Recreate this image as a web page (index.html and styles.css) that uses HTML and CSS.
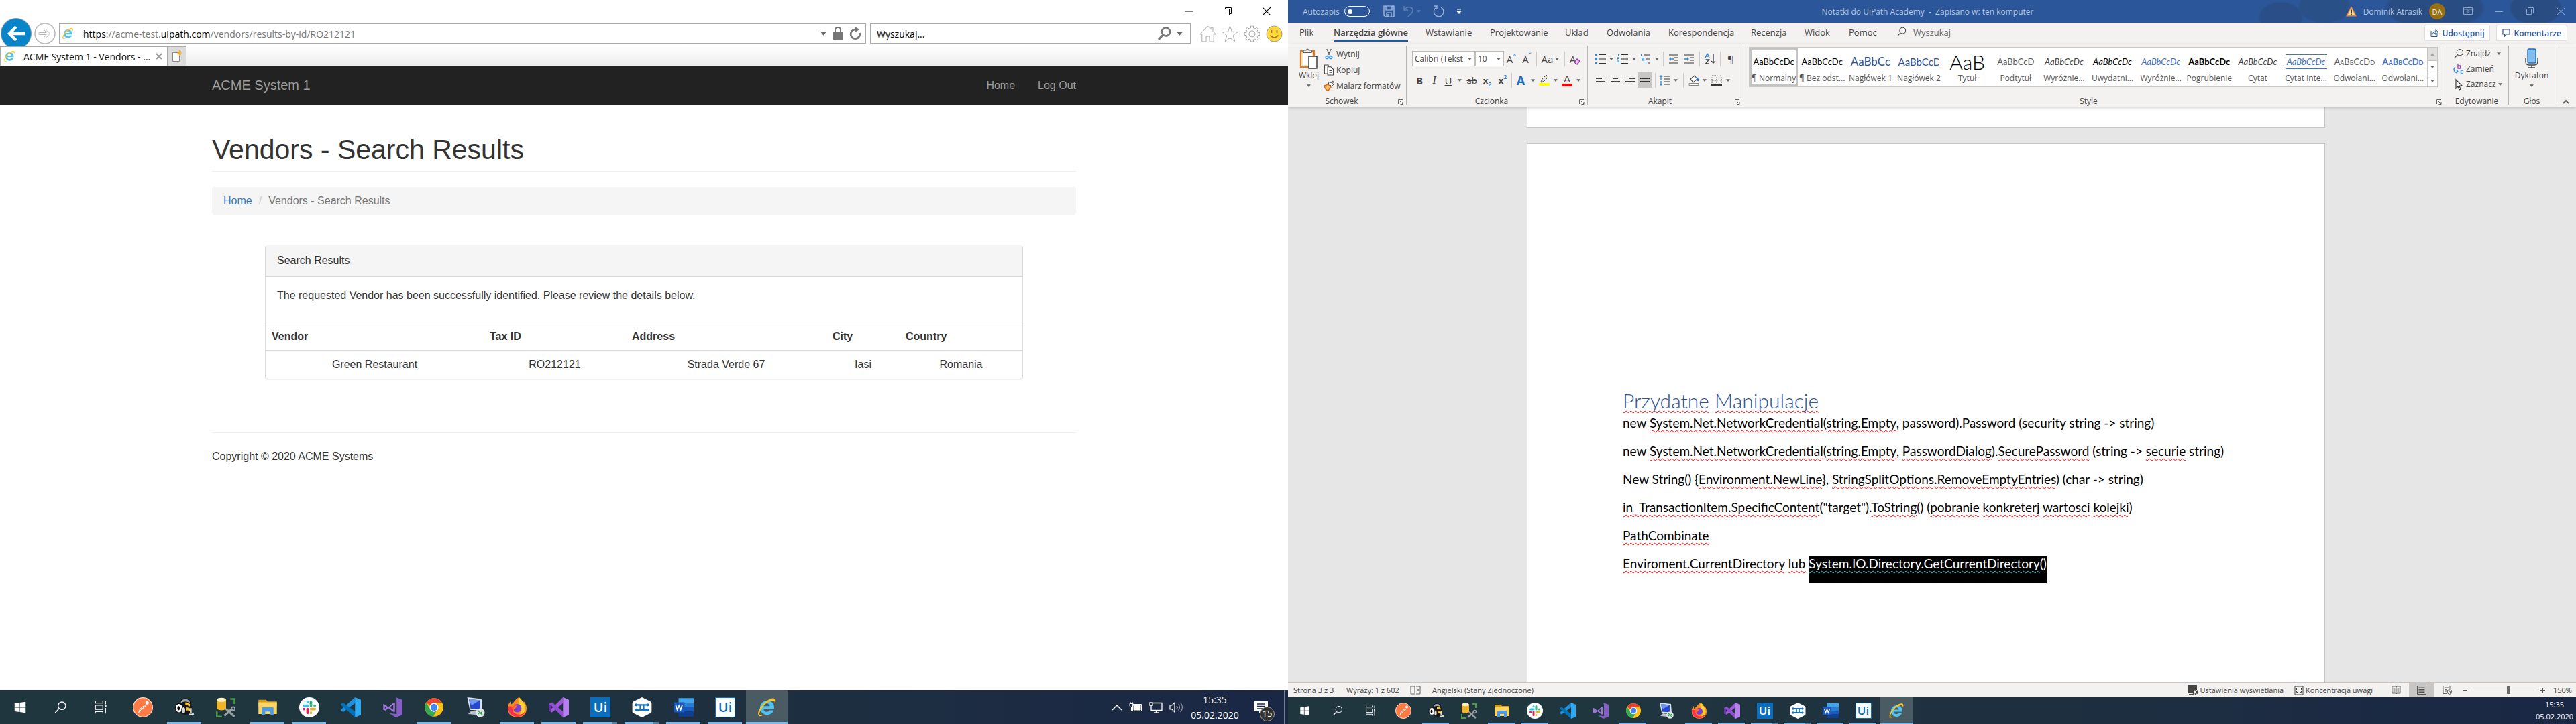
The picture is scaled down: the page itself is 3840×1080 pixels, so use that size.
FILE: index.html
```html
<!DOCTYPE html>
<html lang="pl">
<head>
<meta charset="utf-8">
<title>Vendors - Search Results</title>
<meta name="viewport" content="width=device-width, initial-scale=1">
<link rel="stylesheet" href="styles.css">
</head>
<body>
<svg class="defs" aria-hidden="true">
  <symbol id="arr" viewBox="0 0 8 5"><path d="M0 0h8L4 5z" fill="currentColor"/></symbol>
  <symbol id="win" viewBox="0 0 24 24"><path d="M3 5.500 10.500 4.400V11.500H3zM11.500 4.300 21 3v8.500h-9.500zM3 12.500h7.500v7.100L3 18.500zM11.500 12.500H21V21l-9.500-1.300z" fill="#fff"/></symbol>
  <symbol id="find" viewBox="0 0 24 24"><g fill="none" stroke="currentColor" stroke-width="1.500"><circle cx="14.500" cy="9.500" r="6.200"/><path d="M10 14 3.500 21"/></g></symbol>
  <symbol id="tview" viewBox="0 0 24 24"><g fill="none" stroke="#fff" stroke-width="1.300"><path d="M3.600 2v3h12V2M3.600 22v-3h12v3M3.600 8.500h12v7h-12zM20 2v5M20 13v9"/></g><path d="M18.700 8.500h2.600v3h-2.600z" fill="#fff"/></symbol>
  <symbol id="postman" viewBox="0 0 24 24"><circle cx="12" cy="12" r="11.500" fill="#ff7b45" stroke="#ffd9c8"/><path d="M6 20 8 14 14.500 8.500 16 10.500 10 15z" fill="#fff"/><circle cx="17" cy="6.500" r="2" fill="#fff"/><path d="M8.500 15 15 9.500" stroke="#ff6c37" stroke-width=".8"/></symbol>
  <symbol id="bee" viewBox="0 0 24 24"><ellipse cx="13" cy="6.500" rx="6" ry="5" fill="#9aa2a8" stroke="#111"/><ellipse cx="13" cy="13" rx="8" ry="8" fill="#151515"/><path d="M13 6q4 0 6 3l-1 2q-2-2-5-2zM14 12q4 0 5 2v3q-2-2-5-1z" fill="#f5c232"/><ellipse cx="5.500" cy="13" rx="4.500" ry="5.500" fill="#fff" stroke="#111"/><ellipse cx="5" cy="13" rx="1.500" ry="2.500"/><ellipse cx="11" cy="15.500" rx="2.300" ry="4" fill="#ddd" stroke="#111"/><path d="M19.500 13v6M17.500 20.500h3.500l2-1" stroke="#ddd" stroke-width="2" fill="none"/></symbol>
  <symbol id="db" viewBox="0 0 24 24"><path d="M1 3v11q5.500 3 11 0V3z" fill="#f0b429"/><ellipse cx="6.500" cy="3" rx="5.500" ry="2.500" fill="#fff0c0"/><path d="M17 2h5v6M1 17v6h6" fill="none" stroke="#4c9a45" stroke-width="2"/><path d="m10 22 9-8M12 14l10 9" stroke="#9aa0a3" stroke-width="2.500"/><circle cx="20.500" cy="13.500" r="2" fill="none" stroke="#9aa0a3" stroke-width="1.500"/></symbol>
  <symbol id="folder" viewBox="0 0 24 24"><path d="M1 3h9l2 2h11v6H1z" fill="#d69d16"/><path d="M1 6h22v14H1z" fill="#fcd462"/><path d="M5 21v-8q0-1 1-1h12q1 0 1 1v8h-4v-4H9v4z" fill="#4a9be8"/></symbol>
  <symbol id="slack" viewBox="0 0 24 24"><circle cx="12" cy="12" r="12" fill="#fff"/><g stroke-width="3" stroke-linecap="round"><path d="M10 5.500v.01M5.500 10H10" stroke="#36c5f0"/><path d="M14 5.500V10M18.500 10h.01" stroke="#2eb67d"/><path d="M14 14h4.500M14 18.500h.01" stroke="#ecb22e"/><path d="M10 14v4.500M5.500 14h.01" stroke="#e01e5a"/></g></symbol>
  <symbol id="code" viewBox="0 0 24 24"><path d="M17 0v7L3 17.500 0 16v-1z" fill="#1f8fdc"/><path d="M17 24v-7L3 6.500 0 8v1z" fill="#0072ba"/><path d="M17 0 24 3v18l-7 3z" fill="#2fa9f4"/></symbol>
  <symbol id="vsi" viewBox="0 0 24 24"><path d="M16 0 24 3v18l-8 3-8-5 9 1V3z" fill="#865fc5"/><path d="m1 8 3 1 3 3 7-6 1 1v10l-1 1-7-5-3 3-3-1zM3 11v3l2-2zM13 9l-4 3 4 3z" fill="#a074dc" fill-rule="evenodd"/></symbol>
  <symbol id="chrome" viewBox="0 0 24 24"><circle cx="12" cy="12" r="11" fill="#fbc116"/><path d="M12 12 2.500 6.500A11 11 0 0 1 21.500 6.500H12z" fill="#ea4335"/><path d="M2.500 6.500A11 11 0 0 0 11 23l5-8.500-8.500-.5z" fill="#34a853"/><circle cx="12" cy="12" r="5.300" fill="#fff"/><circle cx="12" cy="12" r="4.200" fill="#4285f4"/></symbol>
  <symbol id="rdp" viewBox="0 0 24 24"><path d="M2 0 19 2l1 14-15-1z" fill="#dfe3ea"/><path d="m4 2 13 1.500.8 11L6 13.500z" fill="#2747d0"/><path d="m4 2 13 1.500-10 6z" fill="#6f9bf2"/><path d="m7 16 7 1v4l-11-1z" fill="#b9bec6"/><circle cx="17.500" cy="18.500" r="5.300" fill="#e6e9ea"/><path d="m15 16 2 2-2 2M20 17l-2 2 2 2" fill="none" stroke="#25a148" stroke-width="1.300"/></symbol>
  <symbol id="fox" viewBox="0 0 24 24"><path d="M14 0q3 2 5 6l1-1q4 5 3 10a11 9 0 0 1-22 0q-1-6 3-10v4l3-2q2-4 7-7z" fill="#ff8a1c"/><path d="M14 0q3 2 5 6 4 5 2 10-2 5-7 5 5-5 2-10-4-5-2-11z" fill="#ffcf33"/><path d="M1 11q0 10 9 12 8 1 12-6-7 6-13 2-4-3-2-8z" fill="#f7314f"/><circle cx="12" cy="13" r="5" fill="#7b3fd0"/><path d="M6 10q4-1 6 0l-2 3q-3 1-2 4-3-2-2-7z" fill="#ff6a2a"/></symbol>
  <symbol id="vs" viewBox="0 0 24 24"><path d="M17 0v7L4 18l-4-2v-1l3-1z" fill="#a259dc"/><path d="M0 8v8l3 1V7z" fill="#6a33a8"/><path d="M17 24v-7L4 6 0 8l3 2z" fill="#8f4fd0"/><path d="M17 0 24 3v18l-7 3z" fill="#b57ff0"/></symbol>
  <symbol id="hex" viewBox="0 0 24 24"><path d="M12 0 22 5q1.500 1 1.500 2v10q0 1-1.500 2L12 24 2 19Q.5 18 .5 17V7Q.5 6 2 5z" fill="#fff"/><path d="M5 9h14M5 15h14M10 9v6M14 9v6" stroke="#1673c1" stroke-width="1.800"/><g fill="#1673c1"><circle cx="5" cy="9" r="1.700"/><circle cx="19" cy="9" r="1.700"/><circle cx="5" cy="15" r="1.700"/><circle cx="19" cy="15" r="1.700"/></g></symbol>
  <symbol id="word" viewBox="0 0 24 24"><path d="M6 1h18v6H6z" fill="#41a5ee"/><path d="M6 7h18v5H6z" fill="#2b7cd3"/><path d="M6 12h18v5H6z" fill="#185abd"/><path d="M6 17h18v6H6z" fill="#103f91"/><path d="M0 6h13v12H0z" fill="#185abd"/><path d="m2.500 9 2 6 2-5 2 5 2-6" fill="none" stroke="#fff" stroke-width="1.400"/></symbol>
  <symbol id="ie" viewBox="0 0 24 24"><path d="M12 4a8.500 8.500 0 1 0 8.300 11.500h-5q-1 1.800-3.300 1.800-3.600 0-3.800-3.800h12.600Q21 4 12 4zM8.300 10.500Q8.800 7.300 12 7.300t3.600 3.200z" fill="#4fc3f1"/><path d="M3.500 22.500Q-.5 21 4 13 9 5 16 2q6-2 6.500 1.500.2 1.500-1 4 .5-4-3.500-3.500Q10 6 5 15q-3.500 6-.5 6.500 2 0 5-1.500-4 3-6 2.500z" fill="#f7c52c"/></symbol>
  <symbol id="launch" viewBox="0 0 8 8"><path d="M.5 7V.5H7M3 3l4 4M7 4v3.500H3.500" fill="none" stroke="#666"/></symbol>
  <symbol id="scis" viewBox="0 0 12 18"><path d="M2.500 1 8 12M9.500 1 4 12" stroke="#555" stroke-width="1.300"/><g fill="none" stroke="#2b88d8" stroke-width="1.600"><circle cx="3" cy="14.500" r="2"/><circle cx="9" cy="14.500" r="2"/></g></symbol>
  <symbol id="copy" viewBox="0 0 16 18"><g fill="#fff" stroke="#444" stroke-width="1.200"><path d="M5.500 15H1V1h6v3M6 4h5l4 4v9H6z"/><path d="M8.500 10h4M8.500 13h4"/></g></symbol>
  <symbol id="brush" viewBox="0 0 16 16"><path d="m1 8 6-2 4 4-4 5q-4 0-6-7z" fill="#f9c06a" stroke="#d9661f" stroke-width="1.400"/><path d="m7 4 5 5 3-3-2-1 2-3-2-1-2 3-1-2z" fill="#fff" stroke="#555"/></symbol>
  <symbol id="paste" viewBox="0 0 28 32"><path d="M2 5h20v24H2z" fill="#fff" stroke="#e07a1f" stroke-width="2.200"/><path d="M4 7h16v20H4z" fill="#fff" stroke="#f8cd80"/><path d="M6 7.500V4h4q2-4 4 0h4v3.500z" fill="#f3f2f1" stroke="#555" stroke-width="1.200"/><path d="M14 13h12v18H14z" fill="#fff" stroke="#333" stroke-width="1.400"/></symbol>
</svg>

<div class="desktop">
<!-- Internet Explorer -->
<section class="screen ie">
  <header class="ie-title">
    <button class="wb" aria-label="Minimalizuj"><svg width="12" height="12"><path d="M0 6h12" stroke="#000" stroke-width="1"/></svg></button>
    <button class="wb" aria-label="Przywróć"><svg width="12" height="12" fill="none" stroke="#000"><path d="M.5 2.500h8v9h-8zM2.500 2.500v-2h9v9h-3"/></svg></button>
    <button class="wb" aria-label="Zamknij"><svg width="12" height="12"><path d="m0 0 12 12M12 0 0 12" stroke="#000" stroke-width="1.200"/></svg></button>
  </header>
  <div class="ie-nav">
    <button class="back" aria-label="Wstecz"><svg width="46" height="46" viewBox="0 0 46 46"><circle cx="23" cy="23" r="22.500" fill="#0a84c8" stroke="#8a9aa4"/><path d="M36 23H14M23 13 13 23l10 10" fill="none" stroke="#fff" stroke-width="4.500"/></svg></button>
    <button class="fwd" aria-label="Dalej"><svg width="32" height="32" viewBox="0 0 32 32" fill="none" stroke="#b8b8b8" stroke-width="1.500"><circle cx="16" cy="16" r="15"/><path d="M7 14.500h11l-4-5h3l6.500 6.500-6.500 6.500h-3l4-5H7z" stroke-width="1"/></svg></button>
    <div class="addr">
      <svg class="i18"><use href="#ie"/></svg>
      <div class="url" role="textbox" aria-label="Adres"><b>https</b>://acme-test.<b>uipath.com</b>/vendors/results-by-id/RO212121</div>
      <svg class="ar"><use href="#arr"/></svg>
      <svg width="16" height="20" viewBox="0 0 16 20"><path d="M1 8h14v11H1z" fill="#777"/><path d="M4 9V5q0-4 4-4t4 4v4" fill="none" stroke="#777" stroke-width="2"/></svg>
      <svg width="18" height="20" viewBox="0 0 18 20"><path d="M12.500 5A6.800 6.800 0 1 0 15.500 9" fill="none" stroke="#777" stroke-width="2.700"/><path d="M9 0v8l6-4z" fill="#777"/></svg>
    </div>
    <div class="srch">
      <input aria-label="Wyszukaj" value="Wyszukaj...">
      <svg width="20" height="20" viewBox="0 0 20 20" fill="none" stroke="#777"><circle cx="12" cy="7.500" r="6" stroke-width="2.700"/><path d="m7.500 12-6.500 7" stroke-width="3"/></svg>
      <svg class="ar"><use href="#arr"/></svg>
    </div>
    <button aria-label="Strona główna"><svg width="25" height="25" viewBox="0 0 25 25" fill="#fff" stroke="#aaa"><path d="M12.500 1 .8 13h3v11H10v-8h5v8h6.200V13h3L20 8.500V3h-3v2.500z"/></svg></button>
    <button aria-label="Ulubione"><svg width="25" height="25" viewBox="0 0 25 25" fill="#fff" stroke="#aaa"><path d="m12.500 1 3 8.300 8.700.2-7 5.300 2.600 8.700-7.300-5-7.300 5 2.600-8.700-7-5.300 8.700-.2z"/></svg></button>
    <button aria-label="Narzędzia"><svg width="25" height="25" viewBox="0 0 25 25" fill="#fff" stroke="#aaa"><path d="M10.500 1h4v3l2.500 1 2.300-2 2.700 2.700L20 8.200l1 2.300h3v4h-3l-1 2.500 2 2.300-2.700 2.700-2.300-2-2.500 1v3h-4v-3L8 20l-2.300 2L3 19.300 5 17l-1-2.500H1v-4h3L5 8.200 3 5.700 5.700 3 8 5l2.500-1z"/><circle cx="12.500" cy="12.500" r="4.500"/></svg></button>
    <button aria-label="Opinia"><svg width="25" height="25" viewBox="0 0 25 25"><circle cx="12.500" cy="12.500" r="11.500" fill="#ffd83d" stroke="#9b9b9b"/><path d="M8.500 7v4M16.500 7v4M6.500 14.500q6 7 12 0" fill="none" stroke="#a07a20" stroke-width="1.700"/></svg></button>
  </div>
  <div class="ie-tabs">
    <div class="tab"><svg class="i18"><use href="#ie"/></svg><span>ACME System 1 - Vendors - ...</span><button aria-label="Zamknij kartę"><svg width="10" height="10"><path d="m1 1 8 8M9 1 1 9" stroke="#999" stroke-width="2"/></svg></button></div>
    <button class="newtab" aria-label="Nowa karta"><svg width="16" height="18" viewBox="0 0 16 18"><path d="M1.500 3.500h10v13h-10z" fill="#fff" stroke="#888"/><path d="M11.500 0v8M8 4h7M9 1.500l5 5M14 1.500l-5 5" stroke="#f5a623" stroke-width="1.200"/></svg></button>
  </div>
  <nav class="navbar"><div class="wrap">
    <a class="brand" href="#">ACME System 1</a>
    <span class="links"><a href="#">Home</a><a href="#">Log Out</a></span>
  </div></nav>
  <main class="wrap acme">
    <h1>Vendors - Search Results</h1>
    <div class="crumb"><a href="#">Home</a><i>/</i><span>Vendors - Search Results</span></div>
    <div class="panel">
      <h2>Search Results</h2>
      <p>The requested Vendor has been successfully identified. Please review the details below.</p>
      <table>
        <colgroup><col class="c1"><col class="c2"><col class="c3"><col class="c4"><col></colgroup>
        <tr><th>Vendor</th><th>Tax ID</th><th>Address</th><th>City</th><th>Country</th></tr>
        <tr><td>Green Restaurant</td><td>RO212121</td><td>Strada Verde 67</td><td>Iasi</td><td>Romania</td></tr>
      </table>
    </div>
    <footer>Copyright © 2020 ACME Systems</footer>
  </main>
  <div class="taskbar big">
    <button class="sys" aria-label="Start"><svg><use href="#win"/></svg></button>
    <button class="sys" aria-label="Szukaj"><svg><use href="#find"/></svg></button>
    <button class="sys" aria-label="Widok zadań"><svg><use href="#tview"/></svg></button>
    <button aria-label="Postman"><svg><use href="#postman"/></svg></button>
    <button class="on" aria-label="DBeaver"><svg><use href="#bee"/></svg></button>
    <button aria-label="SQL"><svg><use href="#db"/></svg></button>
    <button class="on" aria-label="Eksplorator"><svg><use href="#folder"/></svg></button>
    <button class="on" aria-label="Slack"><svg><use href="#slack"/></svg></button>
    <button aria-label="Code"><svg><use href="#code"/></svg></button>
    <button aria-label="Installer"><svg><use href="#vsi"/></svg></button>
    <button class="on" aria-label="Chrome"><svg><use href="#chrome"/></svg></button>
    <button aria-label="Pulpit zdalny"><svg><use href="#rdp"/></svg></button>
    <button class="on" aria-label="Firefox"><svg><use href="#fox"/></svg></button>
    <button class="on" aria-label="Visual Studio"><svg><use href="#vs"/></svg></button>
    <button class="on many"><span class="ui">Ui</span></button>
    <button class="on many" aria-label="Orchestrator"><svg><use href="#hex"/></svg></button>
    <button class="on" aria-label="Word"><svg><use href="#word"/></svg></button>
    <button class="on"><span class="ui inv">Ui</span></button>
    <button class="on act" aria-label="Internet Explorer"><svg><use href="#ie"/></svg></button>
    <div class="tray">
      <svg width="16" height="10"><path d="m1 9 7-7 7 7" fill="none" stroke="#fff" stroke-width="1.500"/></svg>
      <svg width="20" height="16" fill="none" stroke="#fff"><path d="M5.500 3.500h13v10h-13z"/><path d="M7 5h10v7H7z" fill="#fff"/><path d="M19.500 6v5M1 2.500h5v3q0 2-2.500 2T1 5.500zM2 0v2M5 0v2M3.500 8v5h2"/></svg>
      <svg width="20" height="17" fill="none" stroke="#fff" stroke-width="1.300"><path d="M6 1.500h13v11H3V7M10.500 13v3M7 16h8M1 1h4v4H1zM3 5v3"/></svg>
      <svg width="22" height="18" fill="none" stroke="#fff" stroke-width="1.200"><path d="M1 6h3l4-4v14l-4-4H1z"/><path d="M11 7q2 2 0 4"/><path d="M13.500 4.500q4 4.500 0 9M16.500 2q6 7 0 14" opacity=".5"/></svg>
      <div class="clock"><span>15:35</span><span>05.02.2020</span></div>
      <div class="note"><svg width="22" height="20"><path d="M1 1h20v15h-9l-4 3v-3H1z" fill="#fff"/><path d="M5 5h12M5 8.500h12M5 12h8" stroke="#1b2744" stroke-width="1.400"/></svg><span>15</span></div>
    </div>
  </div>
</section>

<!-- Word -->
<section class="screen word">
  <header class="w-title">
    <label class="auto">Autozapis <input type="checkbox" class="toggle"></label>
    <span class="qat">
      <svg width="18" height="18" fill="none" stroke="#b8c7e0" stroke-width="1.200"><path d="M1 1h15v16H3l-2-2zM4 1v6h9V1M5 17v-6h7v6M7 13v4"/></svg>
      <svg width="16" height="18" fill="none" stroke="#5d80b7" stroke-width="1.500"><path d="M1 1v6h6M1 7q5-6 10-4 5 3 2 8l-6 6"/></svg>
      <svg class="ar dim"><use href="#arr"/></svg>
      <svg width="18" height="18" fill="none" stroke="#9fb4d6" stroke-width="1.400"><path d="M1 1h5v5M4.500 3.500A7.300 7.300 0 1 0 12 3"/></svg>
      <svg width="8" height="8"><path d="M1 1h6" stroke="#fff"/><path d="M0 3.500h8L4 8z" fill="#fff"/></svg>
    </span>
    <h2>Notatki do UiPath Academy &nbsp;-&nbsp; Zapisano w: ten komputer</h2>
    <span class="user">
      <svg width="16" height="16"><path d="m8 0 8 15.500H0z" fill="#e8833a"/><path d="m8 3 5.500 11h-11z" fill="#fde3a0"/><path d="M8 5.500v5M8 11.500v2" stroke="#222" stroke-width="1.800"/></svg>
      <span class="nm">Dominik Atrasik</span><span class="av">DA</span>
    </span>
    <span class="wbtns">
      <button aria-label="Opcje wstążki"><svg width="14" height="12" fill="none" stroke="#8ea6cd"><path d="M.5.5h13v10H.500zM.5 3h13M7 9V4.500M5 6.500l2-2 2 2"/></svg></button>
      <button aria-label="Minimalizuj"><svg width="11" height="12"><path d="M0 6.500h11" stroke="#8ea6cd"/></svg></button>
      <button aria-label="Przywróć"><svg width="11" height="12" fill="none" stroke="#8ea6cd"><path d="M.5 2.500h7v8h-7zM2.500 2.500v-2h8v8h-3"/></svg></button>
      <button aria-label="Zamknij"><svg width="11" height="12"><path d="m0 1 11 10M11 1 0 11" stroke="#8ea6cd"/></svg></button>
    </span>
  </header>
  <div class="w-tabs">
    <a href="#">Plik</a><a href="#" class="cur">Narzędzia główne</a><a href="#">Wstawianie</a><a href="#">Projektowanie</a><a href="#">Układ</a><a href="#">Odwołania</a><a href="#">Korespondencja</a><a href="#">Recenzja</a><a href="#">Widok</a><a href="#">Pomoc</a>
    <a href="#" class="look"><svg width="17" height="17"><use href="#find"/></svg>Wyszukaj</a>
    <span class="share">
      <button><svg width="12" height="12" fill="none" stroke="#2b579a"><path d="M1 3v8.500h9V8M3.500 8q0-4 4.500-4V1l3.500 4L8 8.500V6Q5 6 3.500 8z"/></svg>Udostępnij</button>
      <button><svg width="12" height="12" fill="none" stroke="#2b579a" stroke-width="1.200"><path d="M1 1h10v7H6l-2.500 3V8H1z"/></svg>Komentarze</button>
    </span>
  </div>
  <div class="ribbon">
    <div class="grp g1">
      <div class="body clip">
        <button class="tall"><svg width="28" height="32"><use href="#paste"/></svg><span>Wklej</span><svg class="ar"><use href="#arr"/></svg></button>
        <div class="col">
          <button><svg width="12" height="17"><use href="#scis"/></svg>Wytnij</button>
          <button><svg width="16" height="17"><use href="#copy"/></svg>Kopiuj</button>
          <button><svg width="16" height="16"><use href="#brush"/></svg>Malarz formatów</button>
        </div>
      </div>
      <div class="cap">Schowek<svg><use href="#launch"/></svg></div>
    </div>
    <div class="grp g2">
      <div class="body rows">
        <div class="row f1">
          <span class="combo"><select aria-label="Czcionka"><option>Calibri (Tekst podstawowy)</option></select><svg class="ar"><use href="#arr"/></svg></span>
          <span class="combo"><select aria-label="Rozmiar"><option>10</option></select><svg class="ar"><use href="#arr"/></svg></span>
          <button class="lt">A<sup>^</sup></button><button class="lt">A<sup>ˇ</sup></button><hr>
          <button class="lt">Aa<svg class="ar"><use href="#arr"/></svg></button><hr>
          <button class="lt er">A<svg width="10" height="10"><path d="m1 6 4-5 4 3-4 5z" fill="#e8c6ee" stroke="#9b3fb0" stroke-width="1.400"/></svg></button>
        </div>
        <div class="row f2">
          <button class="lt"><b>B</b></button><button class="lt it">I</button><button class="lt"><u>U</u></button><button aria-label="Więcej"><svg class="ar"><use href="#arr"/></svg></button>
          <button class="lt sm"><s>ab</s></button><button class="lt sm"><b>x</b><sub>2</sub></button><button class="lt sm"><b>x</b><sup>2</sup></button><hr>
          <button class="lt fx">A</button><button aria-label="Więcej"><svg class="ar"><use href="#arr"/></svg></button>
          <button aria-label="Wyróżnienie"><svg width="16" height="18"><path d="m3 11 2-4 6-6 3 3-6 6-5 2z" fill="#ddd" stroke="#555"/><path d="M0 13h16v4H0z" fill="#ff0"/></svg></button><button aria-label="Więcej"><svg class="ar"><use href="#arr"/></svg></button>
          <button class="lt fc">A</button><button aria-label="Więcej"><svg class="ar"><use href="#arr"/></svg></button>
        </div>
      </div>
      <div class="cap">Czcionka<svg><use href="#launch"/></svg></div>
    </div>
    <div class="grp g3">
      <div class="body rows">
        <div class="row p1">
          <button aria-label="Punktory"><svg width="16" height="16"><path d="M0 0h3v3H0zM0 6.500h3v3H0zM0 13h3v3H0z" fill="#2b88d8"/><path d="M6 1.500h10M6 8h10M6 14.500h10" stroke="#333" stroke-width="1.200"/></svg></button><svg class="ar"><use href="#arr"/></svg>
          <button aria-label="Numerowanie"><svg width="16" height="16"><path d="M1.500 0v4M0 6h2.500v1.500H0V10h3M0 12h2.500v4H0" fill="none" stroke="#2b88d8"/><path d="M6 1.500h10M6 8h10M6 14.500h10" stroke="#333" stroke-width="1.200"/></svg></button><svg class="ar"><use href="#arr"/></svg>
          <button aria-label="Lista wielopoziomowa"><svg width="16" height="16"><path d="M1.500 0v4M3 6.500h2.500V10H3V8h2M8.500 12v4" fill="none" stroke="#2b88d8" stroke-width="1.200"/><path d="M5 2h10M8 8h7M11 14h4" stroke="#333" stroke-width="1.200"/></svg></button><svg class="ar"><use href="#arr"/></svg><hr>
          <button aria-label="Zmniejsz wcięcie"><svg width="14" height="14"><path d="M0 1h14M8 5h6M8 9h6M0 13h14" stroke="#333" stroke-width="1.200"/><path d="M7 7H1m2-2L1 7l2 2" fill="none" stroke="#2b88d8" stroke-width="1.300"/></svg></button>
          <button aria-label="Zwiększ wcięcie"><svg width="14" height="14"><path d="M0 1h14M8 5h6M8 9h6M0 13h14" stroke="#333" stroke-width="1.200"/><path d="M0 7h6M4 5l2 2-2 2" fill="none" stroke="#2b88d8" stroke-width="1.300"/></svg></button><hr>
          <button aria-label="Sortuj"><svg width="17" height="17" fill="none"><path d="m1 7 3-6 3 6M2 5h4" stroke="#2b88d8" stroke-width="1.400"/><path d="M1.500 10h5l-5 6h5.500M13 1v14M10 12l3 3 3-3" stroke="#444" stroke-width="1.400"/></svg></button><hr>
          <button class="lt">¶</button>
        </div>
        <div class="row p2">
          <button aria-label="Do lewej"><svg width="16" height="14"><path d="M1 .5h14M1 4.500h9M1 8.500h14M1 12.500h9" stroke="#444"/></svg></button>
          <button aria-label="Wyśrodkuj"><svg width="16" height="14"><path d="M1 .5h14M4 4.500h8M1 8.500h14M4 12.500h8" stroke="#444"/></svg></button>
          <button aria-label="Do prawej"><svg width="16" height="14"><path d="M1 .5h14M6 4.500h9M1 8.500h14M6 12.500h9" stroke="#444"/></svg></button>
          <button class="pressed" aria-label="Wyjustuj"><svg width="16" height="14"><path d="M1 .5h14M1 4.500h14M1 8.500h14M1 12.500h14" stroke="#333"/></svg></button><hr>
          <button aria-label="Interlinia"><svg width="18" height="16"><path d="M8 2h9M8 6h9M8 10h9M8 14h9" stroke="#333" stroke-width="1.200"/><path d="M3 1v6M1 3l2-2 2 2M3 9v6M1 13l2 2 2-2" fill="none" stroke="#2b88d8" stroke-width="1.300"/></svg></button><svg class="ar"><use href="#arr"/></svg><hr>
          <button aria-label="Cieniowanie"><svg width="17" height="18"><path d="m3 7 6-5 4 5-6 5z" fill="#fff" stroke="#444" stroke-width="1.200"/><path d="M12 5q3 2 2 5" stroke="#1b6ec2" stroke-width="2" fill="none"/><path d="M1 13.500h14v3H1z" fill="#fff" stroke="#888"/></svg></button><svg class="ar"><use href="#arr"/></svg>
          <button aria-label="Obramowania"><svg width="16" height="16"><path d="M1 1h14M1 1v14M15 1v14M8 1v14M1 8h14" stroke="#555" stroke-dasharray="1 1.500"/><path d="M0 15h16" stroke="#222" stroke-width="1.800"/></svg></button><svg class="ar"><use href="#arr"/></svg>
        </div>
      </div>
      <div class="cap">Akapit<svg><use href="#launch"/></svg></div>
    </div>
    <div class="grp g4">
      <div class="body">
        <div class="gallery">
          <button class="sel"><em>AaBbCcDc</em><span>¶ Normalny</span></button>
          <button><em>AaBbCcDc</em><span>¶ Bez odst...</span></button>
          <button><em class="h1">AaBbCc</em><span>Nagłówek 1</span></button>
          <button><em class="h2">AaBbCcD</em><span>Nagłówek 2</span></button>
          <button><em class="ti">AaB</em><span>Tytuł</span></button>
          <button><em class="gr">AaBbCcD</em><span>Podtytuł</span></button>
          <button><em class="it">AaBbCcDc</em><span>Wyróżnie...</span></button>
          <button><em class="it bk">AaBbCcDc</em><span>Uwydatni...</span></button>
          <button><em class="it bl">AaBbCcDc</em><span>Wyróżnie...</span></button>
          <button><em class="bo">AaBbCcDc</em><span>Pogrubienie</span></button>
          <button><em class="it">AaBbCcDc</em><span>Cytat</span></button>
          <button><em class="it bl rule">AaBbCcDc</em><span>Cytat inte...</span></button>
          <button><em class="gr sc">AaBbCcDd</em><span>Odwołani...</span></button>
          <button><em class="bl sc sb">AaBbCcDd</em><span>Odwołani...</span></button>
          <div class="scr"><button disabled aria-label="W górę"><svg class="ar up"><use href="#arr"/></svg></button><button aria-label="W dół"><svg class="ar"><use href="#arr"/></svg></button><button class="more" aria-label="Więcej"><svg width="8" height="8"><path d="M0 .5h8" stroke="#666"/><path d="M1 3h6L4 7z" fill="#666"/></svg></button></div>
        </div>
      </div>
      <div class="cap">Style<svg><use href="#launch"/></svg></div>
    </div>
    <div class="grp g5">
      <div class="body col">
        <button><svg width="18" height="18"><use href="#find"/></svg>Znajdź<svg class="ar"><use href="#arr"/></svg></button>
        <button><svg width="18" height="18" fill="none" stroke-width="1.400"><path d="M8 1v7h3.500V4H8" stroke="#a33fb5"/><path d="M16 11h-3.500v5H16M4 6q-4 3 0 8l4-1M6 10l2 3-3 2" stroke="#2b88d8"/></svg>Zamień</button>
        <button><svg width="18" height="18"><path d="M5 2v13l3-3 2 5 2-1-2-5h4z" fill="#fff" stroke="#333" stroke-width="1.200"/></svg>Zaznacz<svg class="ar near"><use href="#arr"/></svg></button>
      </div>
      <div class="cap">Edytowanie</div>
    </div>
    <div class="grp g6">
      <div class="body"><button class="tall"><svg width="20" height="32" fill="none"><rect x="4" y="2" width="12" height="21" rx="2" fill="#83beec" stroke="#1b6ec2" stroke-width="1.400"/><path d="M1 16v5q0 5 5 5h8q5 0 5-5v-5M10 26v4M5 30h10" stroke="#444" stroke-width="1.400"/></svg><span>Dyktafon</span><svg class="ar"><use href="#arr"/></svg></button></div>
      <div class="cap">Głos</div>
    </div>
    <div class="fold"><button aria-label="Zwiń wstążkę"><svg width="10" height="7"><path d="m1 6 4-4 4 4" fill="none" stroke="#555" stroke-width="1.800"/></svg></button></div>
  </div>
  <div class="doc">
    <div class="sheet prev"></div>
    <article class="sheet cur">
      <h1><mark>Przydatne</mark> <mark>Manipulacje</mark></h1>
      <p>new <mark>System.Net.NetworkCredential</mark>(<mark>string.Empty</mark>, password).Password (security string -&gt; string)</p>
      <p>new <mark>System.Net.NetworkCredential</mark>(<mark>string.Empty</mark>, <mark>PasswordDialog</mark>).<mark>SecurePassword</mark> (string -&gt; <mark>securie</mark> string)</p>
      <p>New String() {<mark>Environment.NewLine</mark>}, <mark>StringSplitOptions.RemoveEmptyEntries</mark>) (char -&gt; string)</p>
      <p><mark>in_TransactionItem.SpecificContent</mark>("target").<mark>ToString</mark>() (<mark>pobranie</mark> <mark>konkreterj</mark> <mark>wartosci</mark> <mark>kolejki</mark>)</p>
      <p><mark>PathCombinate</mark></p>
      <p><mark>Enviroment.CurrentDirectory</mark> <mark>lub</mark> <span class="hit"><mark>System.IO.Directory.GetCurrentDirectory</mark>()</span></p>
    </article>
  </div>
  <div class="status">
    <span class="s1">Strona 3 z 3</span><span class="s2">Wyrazy: 1 z 602</span>
    <svg class="s3" width="16" height="14" fill="none" stroke="#666"><path d="M7 1H1v11h5M7 1v12M9 1h6v11H9M10 4l4 5M14 4l-4 5"/></svg>
    <span>Angielski (Stany Zjednoczone)</span>
    <div class="right">
      <button><svg width="16" height="16"><path d="M0 0h14v7H9v5H0zM2 13h6v2H2z" fill="#444"/><circle cx="11" cy="10.500" r="3" fill="none" stroke="#444" stroke-width="2.500" stroke-dasharray="2 .8"/></svg>Ustawienia wyświetlania</button>
      <button><svg width="14" height="14" fill="none" stroke="#444"><path d="M1 1h12v12H1z"/><path d="M3.500 6V3.500H6M8 3.500h2.500V6M3.500 8v2.500H6M8 10.500h2.500V8"/></svg>Koncentracja uwagi</button>
      <button class="vw" aria-label="Tryb odczytu"><svg width="14" height="13" fill="none" stroke="#666"><path d="M1 1h5l1 1 1-1h5v10H8l-1 1-1-1H1zM7 2v10M2.500 4h3M2.500 6h3M2.500 8h3M8.500 4h3M8.500 6h3M8.500 8h3"/></svg></button>
      <button class="vw pressed" aria-label="Układ wydruku"><svg width="14" height="13" fill="none" stroke="#555"><path d="M.5.5h13v12H.500zM2.500 3h9M2.500 5.500h9M2.500 8h9M2.500 10.500h9"/></svg></button>
      <button class="vw" aria-label="Układ sieci Web"><svg width="15" height="13" fill="none" stroke="#666"><path d="M6 11.500H1V.5h10V5M3 3h6M3 5.500h4M3 8h3"/><circle cx="10.500" cy="9" r="3.300"/><path d="m8.500 7.500 3 1v3"/></svg></button>
      <button class="pm" aria-label="Pomniejsz"><svg width="6" height="6"><path d="M0 3h6" stroke="#555" stroke-width="2"/></svg></button>
      <input type="range" min="0" max="100" value="57" aria-label="Powiększenie">
      <button class="pm" aria-label="Powiększ"><svg width="8" height="8"><path d="M0 4h8M4 0v8" stroke="#555" stroke-width="2"/></svg></button>
      <span class="pc">150%</span>
    </div>
  </div>
  <div class="taskbar">
    <button class="sys" aria-label="Start"><svg><use href="#win"/></svg></button>
    <button class="sys" aria-label="Szukaj"><svg><use href="#find"/></svg></button>
    <button class="sys" aria-label="Widok zadań"><svg><use href="#tview"/></svg></button>
    <button aria-label="Postman"><svg><use href="#postman"/></svg></button>
    <button class="on" aria-label="DBeaver"><svg><use href="#bee"/></svg></button>
    <button aria-label="SQL"><svg><use href="#db"/></svg></button>
    <button class="on" aria-label="Eksplorator"><svg><use href="#folder"/></svg></button>
    <button class="on" aria-label="Slack"><svg><use href="#slack"/></svg></button>
    <button aria-label="Code"><svg><use href="#code"/></svg></button>
    <button aria-label="Installer"><svg><use href="#vsi"/></svg></button>
    <button class="on" aria-label="Chrome"><svg><use href="#chrome"/></svg></button>
    <button aria-label="Pulpit zdalny"><svg><use href="#rdp"/></svg></button>
    <button class="on" aria-label="Firefox"><svg><use href="#fox"/></svg></button>
    <button class="on" aria-label="Visual Studio"><svg><use href="#vs"/></svg></button>
    <button class="on many"><span class="ui">Ui</span></button>
    <button class="on many" aria-label="Orchestrator"><svg><use href="#hex"/></svg></button>
    <button class="on" aria-label="Word"><svg><use href="#word"/></svg></button>
    <button class="on"><span class="ui inv">Ui</span></button>
    <button class="on act" aria-label="Internet Explorer"><svg><use href="#ie"/></svg></button>
    <div class="tray"><div class="clock"><span>15:35</span><span>05.02.2020</span></div></div>
  </div>
</section>
</div>
</body>
</html>
```
FILE: styles.css
```css
* { box-sizing: border-box; }
body { margin: 0; background: #fff; color: #333; font-family: "Open Sans", "Noto Sans", sans-serif; }
button, input, select { font: inherit; color: inherit; margin: 0; }
button { border: 0; background: none; padding: 0; display: flex; align-items: center; justify-content: center; white-space: nowrap; }
a { color: inherit; text-decoration: none; }
svg { flex: none; }
.defs { position: absolute; width: 0; height: 0; }
.ar { width: 6px; height: 4px; color: #666; }
.i18 { width: 18px; height: 18px; }
.desktop { display: grid; grid-template-columns: 1fr 1fr; min-height: 100vh; }
.screen { display: flex; flex-direction: column; min-width: 0; overflow: hidden; }

/* Browser chrome */
.ie-title { height: 27px; display: flex; justify-content: flex-end; align-items: flex-end; padding: 0 3px 3px 0; }
.wb { width: 58px; height: 14px; }
.ie-nav { height: 42px; display: flex; align-items: center; padding: 4px 4px 0 1px; }
.ie-nav .back { width: 46px; }
.ie-nav .fwd { margin: 0 4px 0 3px; width: 34px; }
.ie-nav > button { width: 33px; }
.ie-nav .srch { margin-right: 9px; }
.addr, .srch { height: 30px; border: 1px solid #aaa; display: flex; align-items: center; background: #fff; }
.addr { flex: 1; padding: 0 6px 0 3px; gap: 9px; font-size: 14px; color: #777; }
.addr .ar, .srch .ar { width: 9px; height: 6px; }
.url { flex: 1; margin-left: 5px; white-space: nowrap; }
.url b { font-weight: 400; color: #000; }
.srch { width: 478px; margin-left: 6px; padding: 0 11px 0 9px; gap: 8px; }
.srch input { flex: 1; min-width: 0; border: 0; background: none; font-size: 14px; color: #000; padding: 0; outline: 0; }
.ie-tabs { height: 30px; display: flex; background: linear-gradient(#fff, #ececec); position: relative; border-bottom: 1px solid #fff; }
.tab { width: 250px; border: 1px solid #aaa; border-width: 1px 1px 0; background: #fff; display: flex; align-items: center; padding: 0 7px 0 4px; font-size: 14px; color: #111; }
.tab span { flex: 1; margin-left: 12px; white-space: nowrap; }
.newtab { width: 28px; border: 1px solid #aaa; border-width: 1px 1px 0 0; background: #dcdcdc; }

/* ACME page */
.navbar { background: #222; border-bottom: 1px solid #080808; color: #9d9d9d; font: 16px/23px "Liberation Sans", Arial, sans-serif; }
.wrap { width: 100%; max-width: 1288px; margin: 0 auto; }
.navbar .wrap { height: 57px; display: flex; align-items: center; justify-content: space-between; }
.brand { font-size: 20px; }
.links { display: flex; gap: 34px; }
.acme { flex: 1; font: 16px/23px "Liberation Sans", Arial, sans-serif; }
.acme h1 { font-size: 41px; line-height: 45px; font-weight: 400; margin: 44px 0 23px; padding-bottom: 9px; border-bottom: 1px solid #eee; }
.crumb { background: #f5f5f5; border-radius: 4px; padding: 9px 17px; height: 41px; color: #777; display: flex; }
.crumb a { color: #337ab7; }
.crumb i { font-style: normal; color: #ccc; margin: 0 10px; }
.panel { margin: 45px 79px 0; border: 1px solid #ddd; border-radius: 4px; box-shadow: 0 1px 1px rgba(0,0,0,.05); }
.panel h2 { margin: 0; font-size: 16px; line-height: 23px; font-weight: 400; padding: 11px 17px 12px; background: #f5f5f5; border-bottom: 1px solid #ddd; }
.panel p { margin: 0; padding: 16px 17px 28px; }
.panel table { width: 100%; border-collapse: collapse; table-layout: fixed; }
.panel th, .panel td { border-top: 1px solid #ddd; height: 42px; padding: 0 9px; }
.panel th { text-align: left; }
.panel td { text-align: center; }
.c1 { width: 325px; } .c2 { width: 212px; } .c3 { width: 299px; } .c4 { width: 109px; }
.acme footer { margin-top: 79px; border-top: 1px solid #eee; padding: 23px 0; }

/* Taskbar */
.taskbar { --cell: 49px; --ico: 24px; height: 40px; flex: none; display: flex; background: linear-gradient(90deg, #20363f 25%, #1e2f40 60%, #1a2745); color: #fff; }
.taskbar > button { width: var(--cell); position: relative; }
.taskbar > button svg { width: var(--ico); height: var(--ico); }
.taskbar > .sys svg { width: 18px; height: 18px; }
.on::after { content: ""; position: absolute; left: 4px; right: 5px; bottom: 0; height: 2px; background: #76b9ed; }
.many::after { border-right: 8px solid #5482a5; }
.on.act::after { left: 0; right: 0; }
.act { background: #4b5b64; }
.ui { width: var(--ico); height: var(--ico); display: grid; place-items: center; background: #0a6ebd; color: #fff; font-size: 17px; line-height: 20px; font-weight: 600; }
.ui.inv { background: #fff; color: #0a6ebd; border: 1px solid #0a6ebd; }
.tray { margin-left: auto; display: flex; align-items: center; padding-right: 2px; }
.clock { width: 60px; font-size: 11px; line-height: 18px; text-align: center; display: grid; }
.big { --cell: 62px; --ico: 30px; height: 50px; }
.big > .sys { width: 60px; }
.big > .sys:nth-child(3) { margin-right: 2px; }
.big > .sys svg { width: 22px; height: 22px; }
.big .on::after { height: 3px; left: 5px; right: 6px; }
.big .on.act::after { left: 0; right: 0; }
.big .ui { font-size: 20px; }
.big .tray { gap: 10px; padding-right: 5px; }
.big .clock { width: 80px; font-size: 14px; line-height: 23px; margin: 0 8px 0 -4px; }
.note { position: relative; width: 46px; height: 50px; border-right: 1px solid #76808d; display: flex; align-items: center; }
.note span { position: absolute; left: 9px; top: 24px; width: 22px; height: 22px; border: 1px solid #999; border-radius: 50%; background: #333; font-size: 13px; line-height: 19px; text-align: center; }

/* Word title bar */
.w-title { height: 34px; display: grid; grid-template-columns: 142px 1fr auto 1fr auto; align-items: center; color: #b5c5df; font-size: 12px;
  background: radial-gradient(ellipse 34px 24px at 1480px 26px, #2a4f88 90%, transparent), radial-gradient(ellipse 40px 26px at 1545px 10px, #2a5088 90%, transparent), radial-gradient(ellipse 76px 34px at 1710px 12px, #294c82 90%, transparent), radial-gradient(ellipse 40px 26px at 1860px 12px, #294c82 90%, transparent), #2b579a; }
.auto { display: flex; align-items: center; gap: 7px; padding-left: 22px; white-space: nowrap; }
.toggle { appearance: none; width: 38px; height: 16px; border: 1px solid #fff; border-radius: 8px; display: flex; align-items: center; padding-left: 4px; }
.toggle::before { content: ""; width: 7px; height: 7px; border-radius: 50%; background: #fff; }
.qat { display: flex; align-items: center; gap: 12px; }
.qat .dim { color: #5d80b7; margin: 0 6px 0 -8px; }
.qat svg:last-child { margin-left: 5px; }
.w-title h2 { margin: 0; padding-left: 40px; font-size: 12px; font-weight: 400; white-space: nowrap; }
.user { display: flex; align-items: center; justify-content: flex-end; white-space: nowrap; }
.nm { margin: 0 10px; }
.av { width: 24px; height: 24px; border-radius: 50%; background: #98700f; color: #eee; display: grid; place-items: center; font-size: 11px; }
.wbtns { display: flex; margin-left: 11px; }
.wbtns button { width: 46px; }

/* Ribbon tabs */
.w-tabs { height: 32px; background: #f3f2f1; display: grid; grid-template-columns: 51px 137px 96px 112px 62px 92px 123px 80px 66px 70px 1fr auto; padding: 0 13px 0 17px; font-size: 13px; align-items: stretch; color: #444; white-space: nowrap; }
.w-tabs > a { justify-self: start; display: flex; align-items: center; border-bottom: 3px solid transparent; margin-bottom: 4px; padding-top: 2px; }
.w-tabs > .cur { font-weight: 600; border-color: #2b579a; }
.look svg { margin-right: 9px; color: #444; }
.w-tabs > .look { color: #666; }
.share { display: flex; gap: 9px; align-items: center; color: #2b579a; font-size: 12px; font-weight: 600; margin-top: -2px; }
.share button { background: #fff; border: 1px solid #e1dfdd; border-radius: 2px; height: 24px; padding: 0 8px; gap: 5px; }

/* Ribbon */
.ribbon { height: 94px; background: #f3f2f1; border-bottom: 1px solid #c8c6c4; box-shadow: 0 1px 4px rgba(0,0,0,.18); z-index: 1; display: flex; font-size: 12px; color: #444; padding-top: 2px; }
.grp { display: flex; flex-direction: column; border-right: 1px solid #b9b7b5; margin-bottom: 3px; flex: none; }
.body { flex: 1; }
.cap { height: 16px; line-height: 16px; text-align: center; position: relative; margin-bottom: -3px; }
.cap svg { position: absolute; right: 4px; top: 5px; width: 8px; height: 8px; }
.g1 { width: 177px; } .g2 { width: 270px; } .g3 { width: 232px; } .g4 { flex: 1; min-width: 0; } .g5 { width: 95px; } .g6 { width: 69px; }
.g1 .cap, .g2 .cap, .g3 .cap, .g4 .cap { padding-right: 16px; }
.clip { display: flex; padding-left: 13px; }
.tall { flex-direction: column; justify-content: flex-start; padding-top: 3px; height: 72px; width: 36px; margin-right: 4px; }
.tall .ar { margin-top: 3px; }
.tall span { line-height: 20px; }
.g6 .tall { width: 100%; }
.col { display: flex; flex-direction: column; align-items: flex-start; }
.clip .col button { height: 24px; display: grid; grid-template-columns: 16px auto; justify-items: center; gap: 3px; }
.g5 .body { padding-left: 11px; }
.g5 button { height: 23px; gap: 2px; }
.g5 button .ar { margin-left: 7px; }
.g5 button .near { margin-left: 1px; }
.rows { padding: 8px 0 0 8px; }
.row { display: grid; height: 23px; margin-bottom: 9px; align-items: center; justify-items: center; }
.row hr { width: 1px; height: 22px; background: #d0cecc; border: 0; margin: 0; }
.f1 { grid-template-columns: 94px 43px 22px 24px 4px 38px 4px 28px; }
.f2 { grid-template-columns: 22px 22px 20px 14px 22px 24px 22px 4px 24px 12px 22px 12px 22px 12px; }
.p1 { grid-template-columns: 22px 10px 24px 10px 24px 10px 8px 24px 22px 8px 24px 6px 26px; }
.p2 { grid-template-columns: 22px 22px 22px 22px 8px 22px 10px 12px 20px 12px 24px 10px; }
.combo { position: relative; width: 100%; height: 23px; }
.combo select { appearance: none; width: 100%; height: 23px; border: 1px solid #c0bebc; background: #fff; border-radius: 0; padding: 0 14px 0 3px; font-size: 12px; }
.combo .ar { position: absolute; right: 5px; top: 10px; }
.lt { font-size: 15px; line-height: 20px; }
.lt sup, .lt sub { font-size: 9px; line-height: 9px; color: #2b88d8; font-weight: 600; }
.lt sup { align-self: flex-start; }
.lt sub { align-self: flex-end; }
.lt .ar { margin-left: 3px; }
.er svg { margin: 8px 0 0 -3px; }
.lt.sm { font-size: 13px; }
.lt.it { font-family: "Liberation Serif", serif; font-style: italic; font-size: 17px; }
.lt.fx { color: #1b6ec2; font-weight: 700; font-size: 18px; }
.fc { border-bottom: 4px solid red; width: 16px; line-height: 15px; }
.pressed { background: #c8c6c4; width: 22px; height: 23px; }
.gallery { display: flex; margin: 2px 10px 0 8px; height: 60px; background: #fff; border: 1px solid #c8c6c4; }
.gallery > button { flex: 1 1 0; min-width: 0; flex-direction: column; justify-content: flex-end; margin: 1px 0; border: 3px solid transparent; }
.gallery > .sel { border-color: #c3c3c3; }
.gallery span { line-height: 16px; color: #555; }
.gallery em { width: 62px; height: 32px; overflow: hidden; font: 13px/30px Lato, sans-serif; color: #000; text-align: center; }
.gallery .h1 { font-size: 17px; color: #2f5496; }
.gallery .h2 { font-size: 15px; color: #2f5496; }
.gallery .ti { font-size: 30px; line-height: 30px; font-weight: 300; }
.gallery .gr { color: #5a5a5a; }
.gallery .it { font-style: italic; color: #404040; }
.gallery .bk { color: #000; }
.gallery .bl { color: #4472c4; }
.gallery .bo { font-weight: 700; }
.gallery .sb { font-weight: 700; }
.gallery .sc { font-variant: small-caps; }
.gallery .rule { border: 1px solid #4472c4; border-width: 1px 0; height: 22px; line-height: 20px; margin-bottom: 6px; }
.scr { width: 15px; border-left: 1px solid #c8c6c4; display: grid; grid-template-rows: 1fr 1fr 1fr; }
.scr button + button { border-top: 1px solid #c8c6c4; }
.scr button:disabled { background: #e1dfdd; }
.up { transform: rotate(180deg); opacity: .5; }
.fold { width: 31px; display: flex; align-items: flex-end; justify-content: center; padding-bottom: 4px; }

/* Document */
.doc { flex: 1; background: #e6e6e6; display: flex; flex-direction: column; align-items: center; padding-right: 18px; gap: 23px; }
.sheet { width: 100%; max-width: 1190px; background: #fff; border: 1px solid #c6c6c6; }
.prev { height: 31px; border-top: 0; }
.sheet.cur { flex: 1; border-bottom: 0; padding: 362px 0 0 142px; color: #000; font: 19px/24px Lato, sans-serif; white-space: nowrap; }
.sheet h1 { margin: 0 0 2px; font-size: 30px; line-height: 40px; font-weight: 300; color: #2f5496; }
.sheet p { margin: 0 0 18px; }
mark { background: none; color: inherit; text-decoration: underline wavy #f00 1px; text-underline-offset: 3px; text-decoration-skip-ink: none; }
.hit { background: #000; color: #fff; padding-bottom: 18px; }
.hit mark { text-decoration-color: #3cc; }

/* Status bar */
.status { height: 22px; background: #f3f2f1; border-top: 1px solid #c8c6c4; display: flex; align-items: center; padding-left: 8px; font-size: 11px; color: #444; white-space: nowrap; }
.s1 { width: 79px; } .s2 { width: 95px; } .s3 { margin-right: 17px; }
.right { margin-left: auto; display: flex; align-items: center; height: 100%; padding-right: 8px; }
.right button { gap: 3px; height: 100%; margin-right: 16px; }
.right .vw { width: 38px; margin: 0; }
.right .pm { width: 12px; margin: 0 2px; }
.right input { appearance: none; width: 99px; height: 12px; background: linear-gradient(#aaa, #aaa) center / 100% 1px no-repeat; }
.right input::-webkit-slider-thumb { appearance: none; width: 5px; height: 11px; background: #666; }
.pc { width: 26px; margin-left: 8px; }
```
